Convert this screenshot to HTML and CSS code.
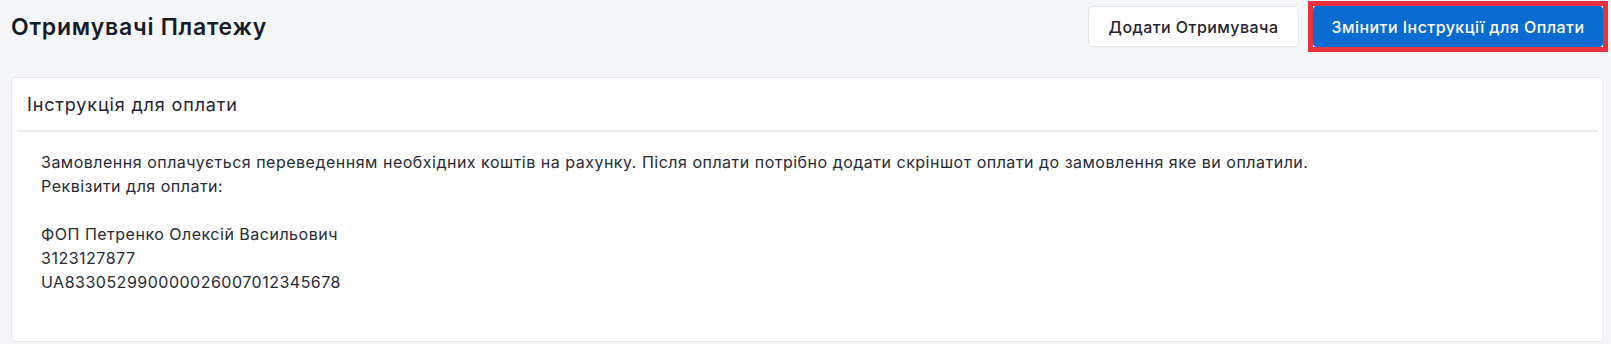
FILE: index.html
```html
<!DOCTYPE html>
<html lang="uk">
<head>
<meta charset="utf-8">
<title>Отримувачі Платежу</title>
<link rel="stylesheet" href="styles.css">
</head>
<body>
<div class="page">
  <header class="topbar">
    <h1 class="title">Отримувачі Платежу</h1>
    <div class="actions">
      <button class="btn btn-light" type="button">Додати Отримувача</button>
      <span class="highlight"><button class="btn btn-primary" type="button">Змінити Інструкції для Оплати</button></span>
    </div>
  </header>
  <section class="card">
    <div class="card-header">Інструкція для оплати</div>
    <div class="card-body">
      <p>Замовлення оплачується переведенням необхідних коштів на рахунку. Після оплати потрібно додати скріншот оплати до замовлення яке ви оплатили.<br>Реквізити для оплати:<br><br>ФОП Петренко Олексій Васильович<br>3123127877<br>UA833052990000026007012345678</p>
    </div>
  </section>
</div>
</body>
</html>
```

FILE: styles.css
```css
html, body {
  margin: 0;
  padding: 0;
  background: #f5f6f9;
  font-family: "Inter", "Noto Sans", "Liberation Sans", sans-serif;
  color: #1f2430;
}
.page {
  padding: 6px 8px 0 11px;
}
.topbar {
  display: flex;
  align-items: center;
  justify-content: space-between;
  height: 41px;
}
.title {
  margin: 0;
  font-size: 23px;
  font-weight: 600;
  color: #161c28;
  letter-spacing: 0.75px;
}
.actions {
  display: flex;
  align-items: center;
  gap: 9px;
}
.btn {
  font-family: inherit;
  font-size: 16px;
  font-weight: 500;
  height: 41px;
  border-radius: 5px;
  padding: 0;
  cursor: pointer;
  letter-spacing: 0.45px;
}
.btn-light {
  background: #ffffff;
  color: #1f2430;
  border: 1px solid #e3e6eb;
  width: 211px;
}
.highlight {
  display: inline-flex;
  border: 5px solid #e8323f;
  margin: -5px -5px -5px 0;
}
.btn-primary {
  background: #0a6bd2;
  color: #ffffff;
  border: 0;
  width: 290px;
  border-radius: 4px;
}
.card {
  margin-top: 30px;
  margin-right: -1px;
  background: #ffffff;
  border: 1px solid #e4e7ec;
  border-radius: 5px;
  height: 265px;
  box-sizing: border-box;
}
.card-header {
  margin: 0 5px;
  padding: 15px 10px 0;
  height: 54px;
  box-sizing: border-box;
  border-bottom: 2px solid #e9ebef;
  font-size: 18px;
  line-height: 24px;
  letter-spacing: 0.85px;
  color: #1f2430;
}
.card-body {
  padding: 18px 29px 0;
}
.card-body p {
  margin: 0;
  font-size: 16px;
  line-height: 24px;
  letter-spacing: 0.5px;
  color: #262b36;
}
```
